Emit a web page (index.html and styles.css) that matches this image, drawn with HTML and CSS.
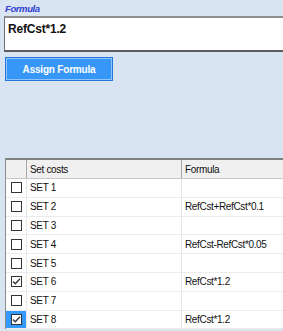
FILE: index.html
```html
<!DOCTYPE html>
<html lang="en">
<head>
    <meta charset="UTF-8">
    <meta name="viewport" content="width=device-width, initial-scale=1.0">
    <title>Set costs</title>
    <link rel="stylesheet" href="styles.css">
</head>
<body>
    <div class="panel">
        <div class="caption">Formula</div>
        <div class="formula-box">RefCst*1.2</div>
        <button class="assign" type="button">Assign Formula</button>
    </div>

    <div class="grid">
        <div class="row head">
            <div class="cell check"></div>
            <div class="cell name">Set costs</div>
            <div class="cell formula">Formula</div>
        </div>
        <div class="row">
            <div class="cell check"><span class="box"></span></div>
            <div class="cell name">SET 1</div>
            <div class="cell formula"></div>
        </div>
        <div class="row">
            <div class="cell check"><span class="box"></span></div>
            <div class="cell name">SET 2</div>
            <div class="cell formula">RefCst+RefCst*0.1</div>
        </div>
        <div class="row">
            <div class="cell check"><span class="box"></span></div>
            <div class="cell name">SET 3</div>
            <div class="cell formula"></div>
        </div>
        <div class="row">
            <div class="cell check"><span class="box"></span></div>
            <div class="cell name">SET 4</div>
            <div class="cell formula">RefCst-RefCst*0.05</div>
        </div>
        <div class="row">
            <div class="cell check"><span class="box"></span></div>
            <div class="cell name">SET 5</div>
            <div class="cell formula"></div>
        </div>
        <div class="row">
            <div class="cell check"><span class="box checked"><svg viewBox="0 0 11 11" width="11" height="11"><path d="M2 5.5 L4.3 7.8 L9 2.8" fill="none" stroke="#333" stroke-width="1.3"/></svg></span></div>
            <div class="cell name">SET 6</div>
            <div class="cell formula">RefCst*1.2</div>
        </div>
        <div class="row">
            <div class="cell check"><span class="box"></span></div>
            <div class="cell name">SET 7</div>
            <div class="cell formula"></div>
        </div>
        <div class="row">
            <div class="cell check current"><span class="box checked"><svg viewBox="0 0 11 11" width="11" height="11"><path d="M2 5.5 L4.3 7.8 L9 2.8" fill="none" stroke="#333" stroke-width="1.3"/></svg></span></div>
            <div class="cell name">SET 8</div>
            <div class="cell formula">RefCst*1.2</div>
        </div>
    </div>
</body>
</html>
```

FILE: styles.css
```css
* {
    box-sizing: border-box;
}

body {
    font-family: "Liberation Sans", Arial, sans-serif;
    background-color: #d8e4f1;
    margin: 0;
    padding: 0;
    overflow: hidden;
}

.panel {
    display: flex;
    flex-direction: column;
    align-items: flex-start;
    padding-top: 3px;
}

.caption {
    margin-left: 5px;
    height: 13px;
    font-size: 9.5px;
    font-weight: bold;
    font-style: italic;
    letter-spacing: -0.4px;
    color: #2f3dd3;
}

.formula-box {
    align-self: stretch;
    margin-left: 4px;
    height: 36px;
    padding: 4px 3px;
    background-color: #fff;
    border-top: 2px solid #8e8e8e;
    border-bottom: 2px solid #5c5c5c;
    border-left: 1px solid #707070;
    font-size: 12px;
    font-weight: bold;
    letter-spacing: -0.2px;
    color: #111;
}

.assign {
    margin: 5px 0 0 5px;
    width: 108px;
    height: 24px;
    padding: 0;
    background-color: #3797f6;
    border: 1px solid #2277d8;
    box-shadow: inset 0 0 0 1px #8fc5fa;
    color: #fff;
    font-family: "Liberation Sans", Arial, sans-serif;
    font-size: 10px;
    font-weight: bold;
    letter-spacing: -0.2px;
}

.grid {
    margin: 77px 0 0 5px;
    border-top: 2px solid #808080;
    border-left: 1px solid #8c8c8c;
    background-color: #fff;
}

.row {
    display: grid;
    grid-template-columns: 21px 155px 1fr;
    height: 18.8px;
    border-bottom: 1px solid #ebebeb;
    font-size: 10px;
    letter-spacing: -0.35px;
    color: #111;
}

.row.head {
    height: 19px;
    background-color: #f0f0f0;
    border-bottom: 1px solid #c8c8c8;
}

.cell {
    display: flex;
    align-items: center;
    padding-left: 3px;
    border-right: 1px solid #e6e6e6;
    white-space: nowrap;
}

.head .cell {
    border-right: 1px solid #a8a8a8;
}

.cell.formula {
    border-right: none;
}

.cell.check {
    justify-content: center;
    padding-left: 0;
}

.cell.current {
    background-color: #3399ff;
}

.box {
    display: block;
    width: 11px;
    height: 11px;
    border: 1px solid #333;
    background-color: #fff;
    position: relative;
}

.box svg {
    position: absolute;
    left: -1px;
    top: -1px;
}
```
